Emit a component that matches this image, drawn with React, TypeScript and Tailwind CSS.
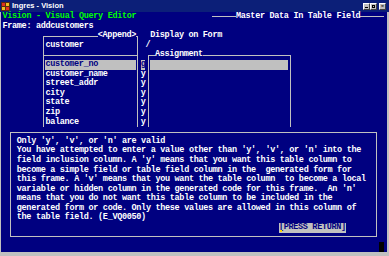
const fields = [
  { row: 'row-start-[7]', name: 'customer_name' },
  { row: 'row-start-[8]', name: 'street_addr' },
  { row: 'row-start-[9]', name: 'city' },
  { row: 'row-start-[10]', name: 'state' },
  { row: 'row-start-[11]', name: 'zip' },
  { row: 'row-start-[12]', name: 'balance' },
]

const message = [
  { row: 'row-start-[14]', text: "Only 'y', 'v', or 'n' are valid" },
  { row: 'row-start-[15]', text: "You have attempted to enter a value other than 'y', 'v', or 'n' into the" },
  { row: 'row-start-[16]', text: "field inclusion column. A 'y' means that you want this table column to" },
  { row: 'row-start-[17]', text: 'become a simple field or table field column in the  generated form for' },
  { row: 'row-start-[18]', text: "this frame. A 'v' means that you want the table column  to become a local" },
  { row: 'row-start-[19]', text: "variable or hidden column in the generated code for this frame.  An 'n'" },
  { row: 'row-start-[20]', text: 'means that you do not want this table column to be included in the' },
  { row: 'row-start-[21]', text: 'generated form or code. Only these values are allowed in this column of' },
  { row: 'row-start-[22]', text: 'the table field. (E_VQ0050)' },
]

function AppIcon() {
  return (
    <svg width="9" height="9" viewBox="0 0 9 9">
      <rect x="0" y="0" width="9" height="9" fill="#5a2a10" />
      <rect x="1" y="1" width="3" height="3" fill="#e03020" />
      <rect x="5" y="1" width="3" height="3" fill="#f0c020" />
      <rect x="1" y="5" width="3" height="3" fill="#f0c020" />
      <rect x="5" y="5" width="3" height="3" fill="#e03020" />
    </svg>
  )
}

function TitleButton({ children }: { children: React.ReactNode }) {
  return (
    <div className="flex h-[7px] w-[7px] items-center justify-center border-t border-l border-t-white border-l-white border-r border-b border-r-[#404040] border-b-[#404040] bg-[#c0c0c0] text-[6px] leading-none text-black">
      {children}
    </div>
  )
}

export default function App() {
  return (
    <div className="flex h-[256px] w-[389px] flex-col overflow-hidden bg-[#c0c0c0]">
      <div className="flex h-[12px] items-center bg-[#0c1f78] pl-[1px] pr-[3px]">
        <AppIcon />
        <span className="ml-[2px] font-['Liberation_Sans',sans-serif] text-[7.5px] font-bold leading-none text-white">
          Ingres - Vision
        </span>
        <div className="ml-auto flex items-center">
          <TitleButton>
            <span className="mt-[3px] block h-px w-[3px] bg-black" />
          </TitleButton>
          <TitleButton>
            <span className="block h-[3px] w-[3px] border border-black" />
          </TitleButton>
          <div className="ml-[2px]">
            <TitleButton>×</TitleButton>
          </div>
        </div>
      </div>

      <div className="mb-[4px] ml-px mr-[2px] flex-1 bg-[#000080] pl-[1.5px]">
        <div className="grid grid-cols-[repeat(80,4.78px)] grid-rows-[repeat(25,9.6px)] whitespace-pre font-['Liberation_Mono',monospace] text-[8.5px] font-bold leading-[9.6px] tracking-[-0.32px] text-white">
          <div className="col-start-[1] col-end-[29] row-start-[1] text-[#00ff00]">Vision - Visual Query Editor</div>
          <div className="col-start-[45] col-end-[81] row-start-[1] h-px self-center bg-[#c0c0c0]" />
          <div className="col-start-[50] col-end-[76] row-start-[1] bg-[#000080]">Master Data In Table Field</div>

          <div className="col-start-[1] col-end-[20] row-start-[2]">Frame: addcustomers</div>

          <div className="col-start-[9] col-end-[30] row-start-[3] row-end-[13] mx-[2.4px] mt-[4.8px] border-t border-r border-l border-[#c0c0c0]" />
          <div className="col-start-[21] col-end-[29] row-start-[3] bg-[#000080]">&lt;Append&gt;</div>
          <div className="col-start-[32] col-end-[47] row-start-[3]">Display on Form</div>

          <div className="col-start-[10] col-end-[18] row-start-[4]">customer</div>
          <div className="col-start-[31] row-start-[4]">/</div>

          <div className="col-start-[9] col-end-[30] row-start-[5] mx-[2.4px] h-px self-center bg-[#c0c0c0]" />
          <div className="col-start-[31] col-end-[62] row-start-[5] row-end-[13] mx-[2.4px] mt-[4.8px] border-t border-r border-l border-[#c0c0c0]" />
          <div className="col-start-[33] col-end-[43] row-start-[5] bg-[#000080]">Assignment</div>

          <div className="col-start-[10] col-end-[29] row-start-[6] bg-[#c0c0c0] text-[#000080]">customer_no</div>
          <div className="col-start-[30] row-start-[6] bg-[#c0c0c0] text-[#000080]">g</div>
          <div className="col-start-[32] col-end-[61] row-start-[6] bg-[#c0c0c0]" />

          {fields.map((f) => (
            <div key={f.name} className={`col-start-[10] col-end-[29] ${f.row}`}>
              {f.name}
            </div>
          ))}
          {fields.map((f) => (
            <div key={`${f.name}-y`} className={`col-start-[30] ${f.row}`}>
              y
            </div>
          ))}

          <div className="col-start-[2] col-end-[80] row-start-[13] row-end-[25] mx-[2.4px] my-[4.8px] border border-[#c0c0c0] bg-[#000080]" />
          {message.map((m) => (
            <div key={m.text} className={`col-start-[4] col-end-[78] ${m.row}`}>
              {m.text}
            </div>
          ))}
          <div className="relative col-start-[59] col-end-[73] row-start-[23] bg-[#c0c0c0] text-[#000080]">
            [PRESS RETURN]
            <span className="absolute bottom-[1px] left-[1px] h-[2px] w-[2px] bg-[#ffd800]" />
          </div>

          <div className="col-start-[80] row-start-[25] bg-black" />
        </div>
      </div>
    </div>
  )
}
